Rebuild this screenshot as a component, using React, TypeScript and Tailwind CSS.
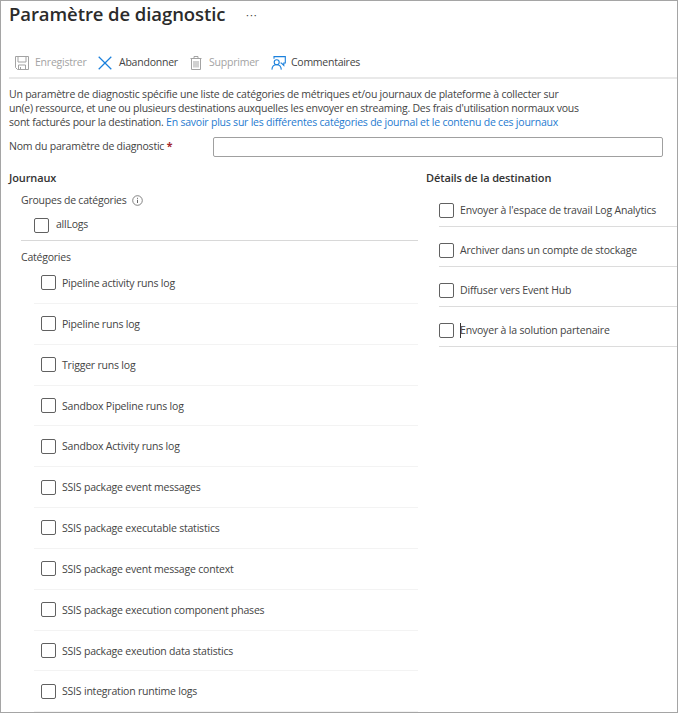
import React from 'react';

const logCategories = [
  'Pipeline activity runs log',
  'Pipeline runs log',
  'Trigger runs log',
  'Sandbox Pipeline runs log',
  'Sandbox Activity runs log',
  'SSIS package event messages',
  'SSIS package executable statistics',
  'SSIS package event message context',
  'SSIS package execution component phases',
  'SSIS package exeution data statistics',
  'SSIS integration runtime logs',
];

const destinations = [
  { label: "Envoyer à l'espace de travail Log Analytics", caret: false },
  { label: 'Archiver dans un compte de stockage', caret: false },
  { label: 'Diffuser vers Event Hub', caret: false },
  { label: 'Envoyer à la solution partenaire', caret: true },
];

const SaveIcon = () => (
  <svg className="h-[14px] w-[14px] shrink-0" viewBox="0 0 14 14" fill="none" stroke="#a3a3a3">
    <path d="M.5 .5h13v13H2.500l-2-2z" />
    <path d="M3 .5v5.500h8V.5M3.500 13.500v-4.500h7v4.500M5.500 11v2.500" />
  </svg>
);

const DiscardIcon = () => (
  <svg className="h-[14px] w-[14px] shrink-0" viewBox="0 0 14 14" fill="none" stroke="#1b80dc" strokeWidth="1.25">
    <path d="M.7 .7l12.600 12.600M13.300 .7L.7 13.300" />
  </svg>
);

const TrashIcon = () => (
  <svg className="h-[14px] w-[12px] shrink-0" viewBox="0 0 12 14" fill="none" stroke="#a3a3a3">
    <path d="M.5 2.500h11M4 2.500v-2h4v2M1.500 2.500v11h9v-11M4 5v6.500M6 5v6.500M8 5v6.500" />
  </svg>
);

const FeedbackIcon = () => (
  <svg className="h-[14px] w-[15px] shrink-0" viewBox="0 0 15 14" fill="none" stroke="#1b80dc" strokeWidth="1.1">
    <path d="M3 2.800V.6h11.300v6.400h-1.500v2.400L10.400 7H9.500" />
    <circle cx="5.700" cy="6.200" r="2.500" />
    <path d="M.9 13.600c.2-3 2-4.900 4.700-4.900s4.500 1.900 4.700 4.900" />
  </svg>
);

const Checkbox = () => (
  <span className="h-[15px] w-[15px] shrink-0 rounded-[2px] border border-[#616161]" />
);

const App: React.FC = () => {
  return (
    <div className="h-[713px] w-[678px] overflow-hidden border border-[#a5a5a5] bg-white font-['Open_Sans','Noto_Sans',sans-serif] text-[10.5px] tracking-[-0.22px] whitespace-nowrap text-[#444]">
      <header className="flex h-[28px] items-center pl-2">
        <h1 className="w-[237px] pb-[2px] text-[18.5px] font-semibold tracking-[-0.08px] text-[#2b2b2b]">Paramètre de diagnostic</h1>
        <span className="text-[11px] tracking-[1px]">···</span>
      </header>

      {/* Toolbar */}
      <div className="mt-[18px] ml-2 flex h-[32px] items-end border-b-2 border-[#e9e9e9] pb-[7px] pl-1.5">
        <div className="flex h-[14px] w-[83px] items-center gap-1.5 text-[#a3a3a3]"><SaveIcon />Enregistrer</div>
        <div className="flex h-[14px] w-[92px] items-center gap-[7px]"><DiscardIcon />Abandonner</div>
        <div className="flex h-[14px] w-[81px] items-center gap-[7px] text-[#a3a3a3]"><TrashIcon />Supprimer</div>
        <div className="flex h-[14px] items-center gap-[5px] tracking-[-0.26px]"><FeedbackIcon />Commentaires</div>
      </div>

      <p className="mt-2 ml-2 leading-[14px]">
        Un paramètre de diagnostic spécifie une liste de catégories de métriques et/ou journaux de plateforme à collecter sur<br />
        <span className="tracking-[-0.245px]">un(e) ressource, et une ou plusieurs destinations auxquelles les envoyer en streaming. Des frais d'utilisation normaux vous</span><br />
        sont facturés pour la destination. <a className="text-[#1f7bd0]">En savoir plus sur les différentes catégories de journal et le contenu de ces journaux</a>
      </p>

      <div className="mt-2 ml-2 flex h-5 items-center">
        <label className="w-[204px]">Nom du paramètre de diagnostic <span className="font-bold text-[#a4262c]">*</span></label>
        <input className="h-5 w-[450px] rounded-[2px] border border-[#a0a0a0]" />
      </div>

      <main className="flex">
        <section className="w-[417px] pt-[11px] pl-2">
          <h2 className="h-5 text-[11px] leading-5 font-semibold tracking-[-0.12px] text-[#333]">Journaux</h2>
          <div className="ml-3">
            <div className="mt-0.5 flex h-5 items-center gap-[5px]">
              <span className="pt-[2px]">Groupes de catégories</span>
              <svg className="h-[11px] w-[11px]" viewBox="0 0 11 11" fill="none" stroke="#666">
                <circle cx="5.500" cy="5.500" r="4.800" strokeWidth=".8" />
                <path d="M5.500 4.800v3.200M5.500 2.800v1" />
              </svg>
            </div>
            <div className="flex h-[31px] items-center gap-[7px] border-b border-[#d8d8d8] pl-[13px]"><Checkbox />allLogs</div>
            <h3 className="mt-[10px] h-3 leading-3">Catégories</h3>
          </div>
          <ul className="ml-[25px]">
            {logCategories.map((label) => (
              <li key={label} className="flex h-[40.85px] items-center gap-1.5 border-b border-[#f3f3f3] pl-[7px]">
                <Checkbox />
                <span className="pt-[2px] tracking-[-0.2px]">{label}</span>
              </li>
            ))}
          </ul>
        </section>

        <section className="min-w-0 flex-1 pt-[11px] pl-2">
          <h2 className="h-[19px] text-[11px] leading-5 font-semibold tracking-[-0.12px] text-[#333]">Détails de la destination</h2>
          <ul className="ml-[13px] tracking-[-0.18px]">
            {destinations.map((item) => (
              <li key={item.label} className="flex h-[40px] items-center border-b border-[#dcdcdc] pt-[7px]">
                <Checkbox />
                {item.caret && <span className="-mr-px ml-[6px] h-[15px] w-px bg-[#333]" />}
                <span className={item.caret ? 'pt-px' : 'ml-[6px] pt-px'}>{item.label}</span>
              </li>
            ))}
          </ul>
        </section>
      </main>
    </div>
  );
};

export default App;
